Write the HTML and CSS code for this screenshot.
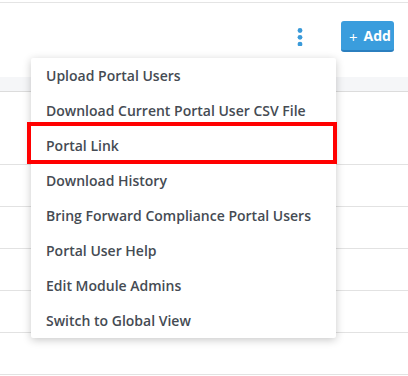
FILE: index.html
```html
<!DOCTYPE html>
<html>
<head>
    <meta charset='utf-8'>
    <title>Portal Users</title>
    <meta name='viewport' content='width=device-width, initial-scale=1'>
    <link rel="stylesheet" href="styles.css">
</head>
<body>
    <div class="page">
        <header class="toolbar">
            <button class="btn-more" type="button" aria-label="More">
                <svg width="6" height="18" viewBox="0 0 6 18">
                    <circle cx="3" cy="2.5" r="2.4" fill="#3a9ad9"/>
                    <circle cx="3" cy="9.3" r="2.4" fill="#3a9ad9"/>
                    <circle cx="3" cy="16.1" r="2.4" fill="#3a9ad9"/>
                </svg>
            </button>
            <button class="btn-add" type="button"><span class="plus">+</span>Add</button>
        </header>
        <div class="table">
            <div class="thead"></div>
            <div class="row row-first"></div>
            <div class="row"></div>
            <div class="row"></div>
            <div class="row"></div>
            <div class="row"></div>
            <div class="row"></div>
        </div>

        <ul class="menu">
            <li>Upload Portal Users</li>
            <li>Download Current Portal User CSV File</li>
            <li>Portal Link</li>
            <li>Download History</li>
            <li>Bring Forward Compliance Portal Users</li>
            <li>Portal User Help</li>
            <li>Edit Module Admins</li>
            <li>Switch to Global View</li>
        </ul>
        <div class="highlight"></div>
    </div>
</body>
</html>
```

FILE: styles.css
```css
html, body {
    margin: 0;
    padding: 0;
    background: #fff;
}
body {
    font-family: "Open Sans", "Liberation Sans", sans-serif;
    color: #3c4043;
}
.page {
    position: relative;
    width: 408px;
    height: 376px;
    overflow: hidden;
    padding-top: 2px;
    box-sizing: border-box;
}
.toolbar {
    display: flex;
    justify-content: flex-end;
    align-items: center;
    gap: 38px;
    border-top: 1px solid #e4e4e4;
    height: 73px;
    padding: 0 14px 0 0;
    box-sizing: border-box;
}
.btn-more {
    border: 0;
    background: none;
    padding: 0;
    margin-top: -4px;
    display: flex;
}
.btn-add {
    display: flex;
    align-items: center;
    height: 31px;
    width: 53px;
    padding: 0 0 0 8px;
    margin-top: -5px;
    border: 0;
    border-bottom: 2px solid #2b7fbf;
    border-radius: 3px;
    background: #3a9ddd;
    color: #fff;
    font-family: "Open Sans", sans-serif;
    font-weight: 700;
    font-size: 14px;
    box-sizing: border-box;
}
.btn-add .plus {
    font-weight: 400;
    font-size: 15px;
    margin-right: 6px;
    position: relative;
    top: 1px;
}
.table {
    margin-top: 2px;
}
.thead {
    height: 14px;
    background: #f5f6f8;
    border-bottom: 1px solid #dcdcdc;
}
.row {
    height: 41px;
    border-bottom: 1px solid #e2e2e2;
}
.row-first {
    height: 72px;
}
.menu {
    position: absolute;
    left: 31px;
    top: 58px;
    width: 305px;
    margin: 0;
    padding: 0;
    list-style: none;
    background: #fff;
    box-shadow: 0 2px 8px rgba(0, 0, 0, 0.22);
    border-radius: 2px;
}
.menu li {
    height: 35px;
    line-height: 35px;
    padding-left: 15px;
    font-size: 14px;
    font-weight: 600;
    color: #454b53;
    white-space: nowrap;
}
.highlight {
    position: absolute;
    left: 27px;
    top: 122px;
    width: 310px;
    height: 42px;
    border: 4px solid #ff0000;
    box-sizing: border-box;
}
```
